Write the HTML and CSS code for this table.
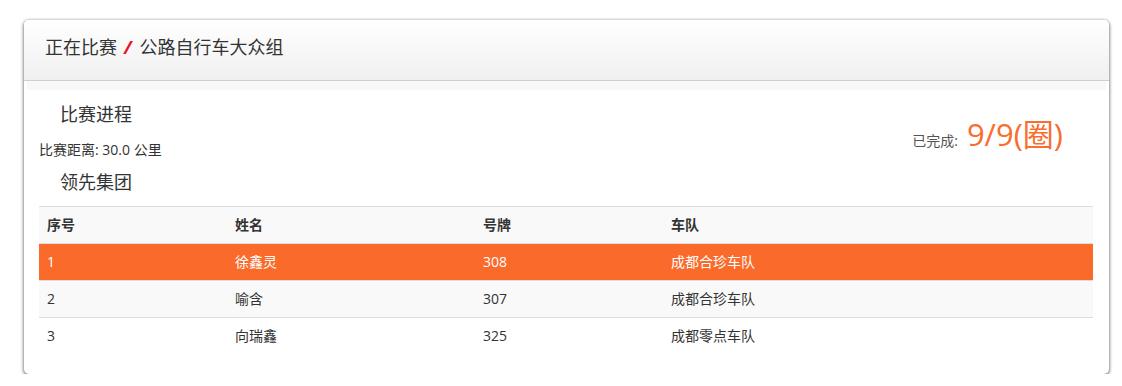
FILE: index.html
```html
<!DOCTYPE html>
<html lang="zh">
<head>
<meta charset="utf-8">
<link rel="stylesheet" href="styles.css">
</head>
<body>
<div class="card">
  <div class="card-head">
    <span>正在比赛</span><span class="sep">/</span><span>公路自行车大众组</span>
  </div>
  <div class="strip"></div>
  <div class="card-body">
    <div class="top">
      <div class="left">
        <h3 class="sec">比赛进程</h3>
        <div class="dist">比赛距离: 30.0 公里</div>
        <h3 class="sec">领先集团</h3>
      </div>
      <div class="done"><span class="done-label">已完成:</span><span class="done-val">9/9(圈)</span></div>
    </div>
    <table class="tbl">
      <colgroup><col class="c1"><col class="c2"><col class="c3"><col class="c4"></colgroup>
      <thead>
        <tr><th>序号</th><th>姓名</th><th>号牌</th><th>车队</th></tr>
      </thead>
      <tbody>
        <tr class="hl"><td>1</td><td>徐鑫灵</td><td>308</td><td>成都合珍车队</td></tr>
        <tr class="alt"><td>2</td><td>喻含</td><td>307</td><td>成都合珍车队</td></tr>
        <tr><td>3</td><td>向瑞鑫</td><td>325</td><td>成都零点车队</td></tr>
      </tbody>
    </table>
  </div>
</div>
</body>
</html>
```
FILE: styles.css
```css
* { box-sizing: border-box; }
html, body { margin: 0; padding: 0; background: #fff; }
body {
  font-family: "Open Sans", "Noto Sans CJK SC", sans-serif;
  color: #333;
  padding: 20px 14px 0 24px;
}
.card {
  width: 1085px;
  height: 354px;
  border-radius: 5px;
  background: #fff;
  box-shadow: 0 1px 3px 1px rgba(0,0,0,0.45);
  overflow: hidden;
}
.card-head {
  height: 61px;
  padding: 0 21px 7px;
  display: flex;
  align-items: center;
  font-size: 18px;
  line-height: 24px;
  color: #333;
  background: linear-gradient(#fff, #f0f0f0);
  border-bottom: 1px solid #cfcfcf;
}
.sep {
  color: #e8141e;
  font-weight: bold;
  font-style: italic;
  margin: 0 8px 0 7px;
}
.strip { height: 9px; background: #f8f8f8; margin: 0 3px; }
.card-body { padding: 0 15px; }
.top { display: flex; justify-content: space-between; }
.sec {
  margin: 0;
  font-weight: normal;
  font-size: 18px;
  padding-left: 21px;
  line-height: 28px;
  color: #333;
}
.top .left .sec:first-child { margin-top: 10px; }
.dist { font-size: 14px; line-height: 20px; margin: 12px 0 8px; }
.done { display: flex; align-items: baseline; margin-top: 20px; padding-right: 31px; }
.done-label { font-size: 14px; color: #555; margin-right: 9px; }
.done-val { font-size: 31px; color: #f96d2d; }
.tbl {
  width: 1054px;
  border-collapse: collapse;
  margin-top: 10px;
  font-size: 14px;
  line-height: 20px;
  table-layout: fixed;
}
.c1 { width: 188px; }
.c2 { width: 248px; }
.c3 { width: 188px; }
.c4 { width: 430px; }
.tbl th, .tbl td {
  text-align: left;
  padding: 0 8px;
  height: 37px;
  vertical-align: middle;
  border-top: 1px solid #ddd;
}
.tbl th { background: #f9f9f9; font-weight: bold; color: #333; }
.tbl td { color: #333; }
.tbl tr.hl td { background: #fa6a2a; color: #fff; }
.tbl tr.alt td { background: #f9f9f9; }
```
